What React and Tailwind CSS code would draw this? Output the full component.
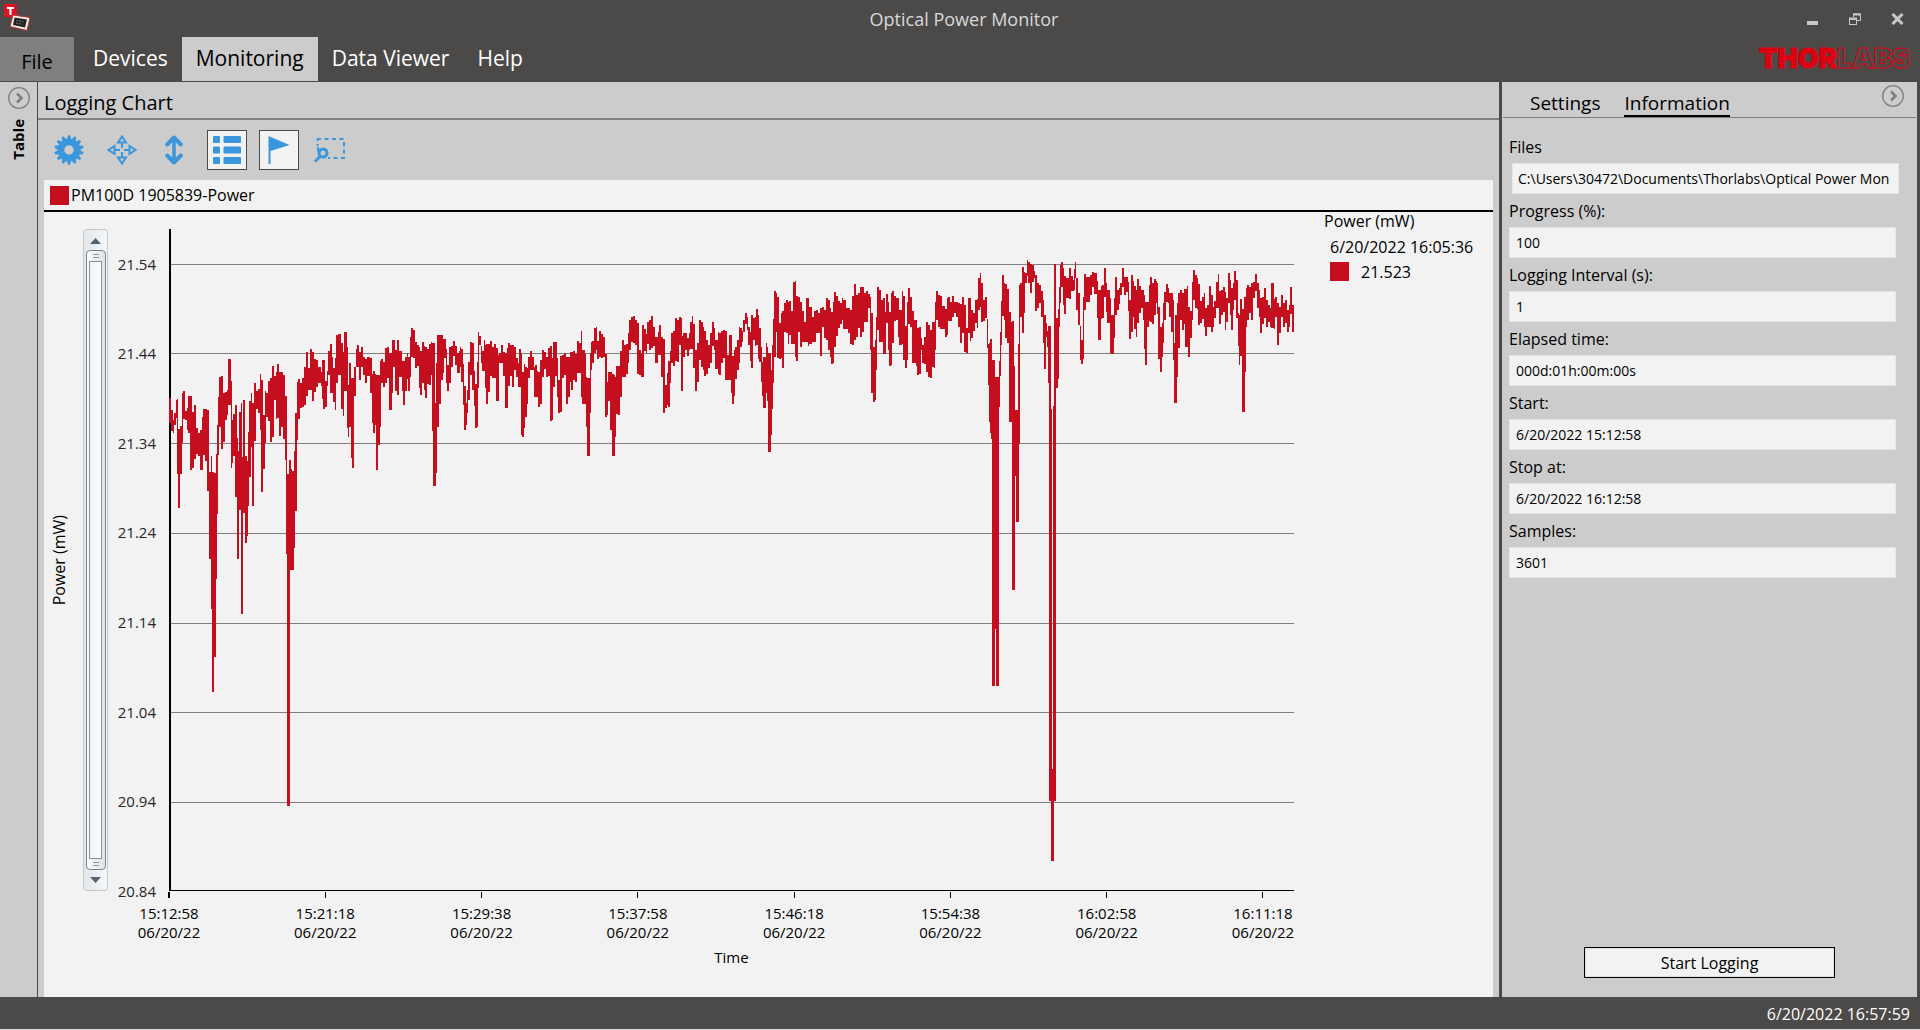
import { useState } from 'react'
import clsx from 'clsx'

const MENU = ['Devices', 'Monitoring', 'Data Viewer', 'Help']

const FIELDS = [
  { id: 'progress', label: 'Progress (%):', value: '100' },
  { id: 'interval', label: 'Logging Interval (s):', value: '1' },
  { id: 'elapsed', label: 'Elapsed time:', value: '000d:01h:00m:00s' },
  { id: 'start', label: 'Start:', value: '6/20/2022 15:12:58' },
  { id: 'stop', label: 'Stop at:', value: '6/20/2022 16:12:58' },
  { id: 'samples', label: 'Samples:', value: '3601' },
]

const Y_TICKS = ['21.54', '21.44', '21.34', '21.24', '21.14', '21.04', '20.94', '20.84']
const X_TICKS = ['15:12:58', '15:21:18', '15:29:38', '15:37:58', '15:46:18', '15:54:38', '16:02:58', '16:11:18']
const GRID_Y = [35, 124, 214, 304, 394, 483, 573]

// Min/max envelope of the logged samples: x, high, low in plot units
const TRACE = [
  -1,169,194, 1,181,202, 3,191,204, 4,184,196, 6,171,189, 7,170,245, 8,200,279, 10,197,245, 12,164,214, 13,162,190,
  15,182,191, 17,179,201, 18,167,204, 20,167,241, 22,183,239, 24,176,230, 26,199,225, 28,204,227, 30,201,241, 32,188,241,
  33,180,226, 35,180,232, 37,181,262, 39,243,330, 41,227,380, 42,243,463, 44,244,428, 46,225,350, 47,196,285, 48,168,226,
  49,148,198, 51,147,220, 53,164,213, 55,163,191, 57,161,186, 58,130,176, 61,152,239, 62,191,234, 63,185,227, 65,176,268,
  67,209,330, 68,222,330, 69,183,281, 71,174,385, 72,228,385, 73,171,284, 75,227,314, 77,232,307, 78,203,277, 79,172,248,
  81,164,218, 82,174,277, 84,154,212, 86,162,180, 88,160,184, 90,145,201, 91,151,263, 93,186,240, 95,162,214, 96,164,188,
  98,152,192, 100,149,213, 102,137,208, 104,147,171, 106,143,190, 107,135,189, 109,143,207, 111,143,198, 113,146,210,
  115,167,231, 116,167,325, 117,245,577, 119,231,577, 120,231,341, 121,240,341, 122,242,341, 124,222,319, 125,184,282, 127,153,211,
  128,150,190, 130,154,179, 132,149,178, 134,138,176, 136,123,167, 138,139,161, 140,120,161, 142,123,172, 144,130,163,
  146,131,158, 148,138,154, 151,143,157, 152,131,170, 153,131,180, 155,152,178, 157,142,157, 158,122,146, 160,115,164,
  162,128,164, 163,139,173, 165,129,181, 166,106,154, 168,105,146, 171,114,180, 173,123,187, 174,103,162, 177,118,199,
  178,156,208, 179,134,198, 181,149,229, 182,149,239, 184,138,167, 186,120,138, 187,116,138, 189,123,151, 191,118,138,
  193,128,146, 195,130,154, 197,128,147, 200,129,164, 202,145,194, 203,142,204, 205,145,196, 206,146,241, 208,146,216,
  210,132,198, 211,130,154, 213,133,158, 215,119,154, 217,118,149, 219,124,181, 222,111,164, 223,111,138, 225,121,162,
  227,111,166, 229,122,148, 232,132,162, 233,132,176, 235,128,162, 237,124,150, 238,128,162, 240,108,148, 241,99,128,
  243,101,129, 245,113,139, 247,116,137, 249,118,159, 250,122,166, 252,113,154, 254,117,161, 255,118,169, 257,120,155,
  259,115,156, 261,113,146, 262,114,202, 263,114,257, 265,174,257, 266,134,244, 267,106,198, 269,106,175, 271,106,151,
  273,110,144, 274,110,129, 276,120,154, 277,136,162, 279,118,154, 281,117,138, 283,112,127, 285,117,136, 287,124,144,
  289,122,144, 290,118,138, 291,120,153, 293,135,176, 294,157,201, 296,174,196, 297,161,184, 298,133,171, 300,113,146,
  302,114,161, 304,142,177, 305,155,199, 307,133,198, 308,103,159, 309,107,116, 311,117,134, 312,122,142, 314,111,142,
  315,116,159, 316,115,175, 318,115,163, 320,112,147, 322,118,149, 324,115,149, 326,119,172, 328,126,172, 329,124,134,
  331,116,134, 333,123,147, 335,124,179, 337,119,179, 338,114,157, 340,116,147, 342,116,158, 344,118,141, 346,129,148,
  348,134,158, 349,120,158, 351,124,206, 352,143,208, 354,135,199, 355,138,188, 357,139,175, 358,128,149, 360,122,141,
  362,128,141, 364,138,168, 365,136,168, 367,142,168, 368,143,178, 370,131,175, 372,121,148, 374,123,140, 376,128,148,
  378,119,147, 380,117,192, 382,129,191, 383,113,158, 385,113,147, 387,129,168, 388,151,184, 390,127,183, 392,126,149,
  394,124,146, 396,128,175, 398,128,168, 400,123,153, 401,123,161, 403,122,151, 405,125,153, 407,112,144, 409,114,144,
  411,102,168, 412,121,175, 415,125,175, 416,148,198, 417,149,227, 420,124,184, 421,113,141, 422,112,134, 424,99,124,
  426,98,121, 427,112,130, 429,102,128, 431,105,129, 433,108,128, 435,125,188, 437,153,186, 438,143,172, 440,143,201,
  442,145,227, 444,146,227, 445,148,208, 446,137,185, 448,137,186, 450,122,168, 452,111,148, 454,116,148, 456,115,145,
  458,104,134, 459,91,121, 461,88,113, 463,87,114, 465,91,116, 467,94,145, 469,121,146, 471,125,148, 472,96,148,
  474,100,122, 476,105,124, 477,93,115, 479,91,121, 481,87,119, 483,98,117, 485,108,134, 487,108,134, 488,103,126,
  489,96,126, 491,108,148, 493,110,184, 495,156,179, 497,144,176, 498,132,178, 500,122,154, 501,104,134, 503,102,137,
  505,89,132, 507,91,133, 509,88,116, 511,89,162, 512,107,162, 513,104,128, 515,104,121, 517,109,127, 519,104,121,
  520,93,120, 522,87,120, 523,95,139, 525,121,162, 527,114,153, 529,91,131, 531,93,138, 533,98,141, 534,102,147,
  536,111,145, 538,116,139, 540,104,134, 542,93,117, 544,99,121, 545,111,140, 548,103,145, 549,104,146, 551,102,134,
  553,101,129, 555,102,151, 557,126,151, 559,106,151, 561,106,164, 562,127,175, 564,121,167, 565,118,150, 567,111,141,
  569,98,134, 570,99,118, 572,102,113, 573,91,103, 575,84,95, 577,88,101, 578,98,116, 580,103,132, 581,86,139,
  583,89,111, 585,88,117, 586,80,116, 588,86,130, 589,99,133, 591,118,153, 592,133,167, 593,128,179, 596,114,164,
  597,118,172, 598,124,223, 601,141,206, 602,116,180, 603,90,154, 604,62,128, 606,64,103, 607,68,129, 609,94,130,
  611,84,129, 612,82,139, 614,74,103, 616,71,104, 618,73,115, 619,72,106, 621,82,115, 623,53,115, 625,52,128,
  626,67,132, 628,68,103, 630,73,118, 632,82,113, 634,93,113, 636,69,113, 638,69,117, 639,78,115, 642,88,113,
  644,82,113, 646,81,104, 648,84,104, 650,79,127, 652,78,98, 654,81,109, 656,69,111, 658,71,121, 660,79,128,
  661,83,135, 663,73,134, 664,63,118, 666,67,107, 668,72,99, 670,74,95, 672,69,91, 673,71,100, 676,79,100,
  678,79,104, 680,81,115, 682,67,116, 684,55,111, 686,66,108, 688,64,99, 690,58,108, 692,58,103, 694,64,93,
  696,62,93, 698,65,79, 700,68,121, 701,84,164, 703,118,173, 705,111,171, 706,88,141, 707,58,101, 709,61,113,
  711,71,113, 713,69,125, 715,83,125, 716,65,94, 718,73,121, 719,83,137, 721,64,136, 722,62,114, 724,67,92,
  726,69,91, 728,69,108, 729,81,116, 732,62,115, 733,67,131, 735,97,139, 737,73,131, 738,59,95, 740,68,98,
  742,82,134, 744,91,134, 746,91,137, 747,99,146, 749,98,145, 751,109,121, 752,116,134, 754,108,135, 756,93,143,
  758,96,148, 760,101,149, 762,93,138, 764,93,139, 765,73,121, 766,62,91, 768,66,98, 770,67,100, 772,77,100,
  775,80,108, 777,69,106, 778,68,92, 780,73,92, 782,67,88, 784,73,84, 786,73,88, 788,74,98, 790,75,114,
  792,68,104, 794,76,123, 796,99,124, 798,69,104, 800,69,112, 801,81,109, 803,84,102, 805,71,94, 807,70,99,
  808,49,81, 810,44,78, 811,54,93, 813,71,92, 815,68,89, 817,90,119, 818,115,156, 819,114,193, 820,110,204,
  821,110,210, 822,131,457, 825,148,400, 826,148,457, 829,132,178, 830,103,147, 831,72,116, 832,46,87,
  834,54,91, 835,55,109, 837,60,114, 839,83,193, 841,93,193, 842,92,361, 844,137,361, 845,181,247, 846,181,293,
  848,115,293, 849,56,215, 850,54,88, 852,38,104, 854,43,84, 855,44,54, 857,31,47, 858,33,54, 860,35,64,
  862,36,53, 864,42,49, 865,46,82, 867,54,79, 869,56,74, 871,62,88, 873,71,114, 874,86,140, 876,94,108,
  877,102,118, 878,97,154, 879,97,572, 881,180,632, 882,540,632, 883,177,632, 884,35,572, 886,89,159, 888,80,150, 889,58,98, 890,36,74,
  891,33,58, 893,39,76, 894,47,85, 896,49,69, 899,39,70, 901,47,62, 903,51,62, 904,40,61, 905,33,49,
  906,49,81, 908,64,96, 910,97,131, 911,111,135, 913,68,130, 914,45,81, 916,48,73, 918,48,73, 920,46,66,
  922,43,58, 924,44,65, 926,44,65, 927,52,89, 928,61,111, 931,57,90, 932,56,89, 934,39,68, 936,54,83,
  937,61,94, 940,69,124, 941,86,125, 944,69,109, 945,48,86, 947,61,81, 949,59,75, 950,54,66, 952,39,58,
  954,48,66, 956,48,63, 958,53,82, 959,71,110, 961,46,103, 963,52,88, 964,57,100, 966,61,108, 967,50,94,
  969,57,84, 971,61,79, 973,61,91, 974,66,120, 975,73,136, 977,73,98, 979,56,92, 980,48,93, 982,54,95,
  984,50,86, 986,52,74, 987,54,85, 988,78,130, 990,98,143, 992,94,128, 993,74,114, 994,63,91, 996,55,73,
  998,59,74, 999,64,88, 1001,64,103, 1003,71,131, 1004,114,174, 1005,86,174, 1007,74,148, 1008,64,119, 1010,61,91,
  1012,64,101, 1014,60,95, 1015,60,118, 1017,57,118, 1018,78,128, 1020,82,109, 1022,53,91, 1023,41,71, 1025,46,79,
  1027,49,80, 1028,55,96, 1030,72,94, 1032,68,90, 1034,64,98, 1035,79,107, 1037,76,98, 1039,57,98, 1041,66,103,
  1043,78,98, 1044,72,89, 1046,53,79, 1048,45,79, 1049,62,95, 1051,61,86, 1053,58,83, 1055,63,101, 1056,69,93,
  1058,44,74, 1060,51,86, 1061,59,101, 1063,54,81, 1064,42,71, 1066,51,89, 1068,84,117, 1069,86,136, 1070,70,127,
  1072,80,183, 1074,68,183, 1075,68,143, 1076,59,98, 1077,56,91, 1079,58,84, 1081,54,91, 1083,53,69, 1085,45,62,
  1087,54,79, 1089,61,88, 1090,69,104, 1092,68,95, 1094,59,89, 1096,71,98, 1098,76,93, 1100,79,98, 1101,54,99,
  1104,70,100, 1105,68,88, 1107,74,116, 1109,78,104, 1111,66,88, 1113,74,98, 1115,71,94, 1117,81,103, 1119,76,98,
  1120,58,85, 1122,76,103, 1124,76,103,
]

function tracePath() {
  let d = ''
  for (let i = 0; i + 3 < TRACE.length; i += 3) {
    d += `M${TRACE[i]} ${TRACE[i + 1]}H${TRACE[i + 3]}V${TRACE[i + 2]}H${TRACE[i]}Z`
  }
  return d
}

function AppIcon() {
  return (
    <svg width="28" height="30" viewBox="0 0 28 30" aria-hidden="true">
      <rect x="0" y="0" width="13" height="13" fill="#e01025" />
      <path d="M3 3h7v2H7.600v6H5.400V5H3z" fill="#fff" />
      <path d="M9 11l17 2.500-3 13L6 22.500z" fill="#f5eeee" stroke="#b5342c" strokeWidth="1" />
      <path d="M10.500 13.500l12.500 2-2 8-12-2.500z" fill="#222" />
      <path d="M12.500 16.500l7 1.200M12 19l6.500 1.200" stroke="#777" strokeDasharray="2 1" />
    </svg>
  )
}

function Logo() {
  return (
    <svg width="158" height="38" viewBox="0 0 158 38" role="img" aria-label="Thorlabs">
      <g fontFamily="Inter, 'Liberation Sans', sans-serif" fontWeight="900" fontSize="27">
        <text x="1" y="28" fill="#dc0010" stroke="#dc0010">THOR</text>
        <text x="79" y="28" fill="none" stroke="#dc0010">LABS</text>
      </g>
    </svg>
  )
}

function CircleChevron() {
  return (
    <svg width="22" height="22" viewBox="0 0 22 22" fill="none" stroke="#7f7f7f" aria-hidden="true">
      <circle cx="11" cy="11" r="10.300" strokeWidth="1.300" />
      <path d="M9 6.500l4.500 4.500L9 15.500" strokeWidth="2.600" />
    </svg>
  )
}

function GearIcon() {
  const teeth = Array.from({ length: 14 }, (_, i) => (i * 360) / 14)
  return (
    <svg width="30" height="30" viewBox="0 0 30 30" aria-hidden="true">
      <circle cx="15" cy="15" r="8" fill="none" stroke="#3a96dd" strokeWidth="6.500" />
      {teeth.map((a) => (
        <path key={a} d="M12.500 5L14 0.300h2L17.500 5z" fill="#3a96dd" transform={`rotate(${a} 15 15)`} />
      ))}
    </svg>
  )
}

function MoveIcon() {
  return (
    <svg width="30" height="30" viewBox="0 0 30 30" fill="none" stroke="#3a96dd" strokeWidth="2" aria-hidden="true">
      {[0, 90, 180, 270].map((a) => (
        <path key={a} d="M15 1.500L19 7.500H11ZM15 7.500V13" transform={`rotate(${a} 15 15)`} />
      ))}
    </svg>
  )
}

function UpDownIcon() {
  return (
    <svg width="18" height="30" viewBox="0 0 18 30" fill="none" stroke="#3a96dd" strokeLinejoin="round" strokeLinecap="round" aria-hidden="true">
      <path d="M9 4V26" strokeWidth="3.500" />
      <path d="M2.200 9.500L9 2.500L15.800 9.500M2.200 20.500L9 27.500L15.800 20.500" strokeWidth="4" />
    </svg>
  )
}

function ListIcon() {
  return (
    <svg width="28" height="28" viewBox="0 0 28 28" fill="#3a96dd" aria-hidden="true">
      {[0, 10.500, 21].map((y) => (
        <g key={y}>
          <rect x="0" y={y} width="7" height="7" rx="1" />
          <rect x="10.500" y={y} width="17.500" height="7" rx="1" />
        </g>
      ))}
    </svg>
  )
}

function FlagIcon() {
  return (
    <svg width="22" height="30" viewBox="0 0 22 30" fill="#3a96dd" aria-hidden="true">
      <path d="M0.500 1L21.500 10L2.500 16V29H0.500Z" />
    </svg>
  )
}

function ZoomAreaIcon() {
  return (
    <svg width="31" height="26" viewBox="0 0 31 26" fill="none" stroke="#3a96dd" strokeWidth="2" aria-hidden="true">
      <path d="M3 2H30V21H14" strokeDasharray="4 3.500" />
      <path d="M3.500 2V9" strokeDasharray="2 3" />
      <circle cx="9" cy="16" r="4" strokeWidth="3" />
      <path d="M6 19.500L1 24.500" strokeWidth="3" />
      <path d="M4 10V15" />
    </svg>
  )
}

function WindowControls() {
  return (
    <div className="flex items-center gap-[30px] text-[#c8c8c8]">
      <button aria-label="Minimize" className="flex h-3 w-3 items-end">
        <span className="h-1 w-[11px] bg-[#c8c8c8]" />
      </button>
      <button aria-label="Restore">
        <svg width="12" height="12" viewBox="0 0 12 12" fill="none" stroke="currentColor">
          <path d="M4.500 4V1H11.500V7.500H8" />
          <path d="M4 1.500H12" strokeWidth="2" />
          <rect x="0.500" y="5" width="7" height="6.500" />
          <path d="M0 6H8" strokeWidth="2" />
        </svg>
      </button>
      <button aria-label="Close">
        <svg width="13" height="12" viewBox="0 0 13 12" fill="none" stroke="currentColor" strokeWidth="3">
          <path d="M1.500 1L11.500 11M11.500 1L1.500 11" />
        </svg>
      </button>
    </div>
  )
}

function Header({ active, onSelect }) {
  return (
    <header className="bg-[#4c4a48] text-white">
      <div className="grid h-[37px] grid-cols-[1fr_auto_1fr] items-center pl-1 pr-4">
        <AppIcon />
        <h1 className="pl-5 text-lg text-[#d8d8d8]">Optical Power Monitor</h1>
        <div className="flex justify-end">
          <WindowControls />
        </div>
      </div>
      <div className="flex h-[45px] items-start justify-between">
        <nav className="flex h-11">
          <button className="w-[74px] bg-[#7f7f7f] pt-1.5 text-xl text-black">File</button>
          <div className="flex pl-[5px]">
            {MENU.map((item) => (
              <button
                key={item}
                onClick={() => onSelect(item)}
                className={clsx('px-3.5 text-[21px]', item === active && 'bg-[#cccccc] text-black')}
              >
                {item}
              </button>
            ))}
          </div>
        </nav>
        <div className="pr-1 pt-[3px]">
          <Logo />
        </div>
      </div>
    </header>
  )
}

function Toolbar() {
  const [legend, setLegend] = useState(true)
  const [marker, setMarker] = useState(true)
  const toggle = (on) => clsx('flex h-10 w-10 items-center justify-center border', on ? 'border-[#4c4a48] bg-[#f2f2f2]' : 'border-transparent')
  return (
    <div className="flex h-[60px] items-center pl-4">
      <button aria-label="Chart settings" className="w-[53px]"><GearIcon /></button>
      <button aria-label="Pan" className="w-[58px]"><MoveIcon /></button>
      <button aria-label="Autoscale" className="w-[42px]"><UpDownIcon /></button>
      <button aria-label="Legend" aria-pressed={legend} onClick={() => setLegend(!legend)} className={toggle(legend)}>
        <ListIcon />
      </button>
      <button aria-label="Marker" aria-pressed={marker} onClick={() => setMarker(!marker)} className={clsx('ml-3', toggle(marker))}>
        <FlagIcon />
      </button>
      <button aria-label="Zoom to area" className="ml-[15px]"><ZoomAreaIcon /></button>
    </div>
  )
}

function RangeBar() {
  return (
    <div className="flex flex-col items-center rounded border border-[#c3c9cf] bg-linear-to-r from-[#e3e7ec] to-[#f4f7fa]">
      <svg width="11" height="20" viewBox="0 0 11 20" aria-hidden="true">
        <path d="M0 14L5.500 8L11 14Z" fill="#56626f" />
      </svg>
      <div className="flex w-5 flex-1 flex-col items-center rounded border border-[#7d858d] bg-linear-to-r from-[#f8f9fa] to-[#dfe3e8]">
        <div className="my-[3px] h-1 w-1.5 border-y border-[#8d98a3]" />
        <div className="w-[13px] flex-1 border border-[#8b9199] bg-linear-to-r from-[#eef0f5] to-white" />
        <div className="my-[3px] h-1 w-1.5 border-y border-[#8d98a3]" />
      </div>
      <svg width="11" height="20" viewBox="0 0 11 20" aria-hidden="true">
        <path d="M0 7L5.500 13L11 7Z" fill="#56626f" />
      </svg>
    </div>
  )
}

function Plot() {
  return (
    <svg className="block h-full w-full" viewBox="0 0 1125 662" preserveAspectRatio="none" shapeRendering="crispEdges" role="img" aria-label="Power over time">
      {GRID_Y.map((y) => (
        <rect key={y} x="0" y={y} width="1125" height="1" fill="#7f7f7f" />
      ))}
      <rect x="0" y="0" width="2" height="662" fill="#000" />
      <rect x="0" y="661" width="1125" height="1" fill="#000" />
      <path d={tracePath()} fill="#c50f1f" transform="translate(1 0)" />
    </svg>
  )
}

function LoggingChart() {
  return (
    <div className="grid min-h-0 flex-1 grid-cols-[39px_25px_61px_1fr_199px] grid-rows-[1fr_106px] pt-[17px]">
      <div className="flex items-center justify-center pr-2.5">
        <span className="rotate-180 whitespace-nowrap text-base [writing-mode:vertical-rl]">Power (mW)</span>
      </div>
      <RangeBar />
      <div className="flex flex-col justify-between pr-[13px] pt-[35px]">
        {Y_TICKS.map((t) => (
          <div key={t} className="flex h-0 items-center justify-end text-[#262626]">{t}</div>
        ))}
      </div>
      <Plot />
      <div className="pl-[30px] text-base">
        <div className="-mt-[17px] h-[19px] leading-[19px]">Power (mW)</div>
        <div className="flex h-[31px] items-center pl-1.5">6/20/2022 16:05:36</div>
        <div className="flex h-[19px] items-center gap-3 pl-1.5">
          <span className="h-[19px] w-[19px] bg-[#c50f1f]" />
          21.523
        </div>
      </div>

      <div className="col-span-3" />
      <div>
        <div className="flex justify-between pr-[31px] pt-px">
          {X_TICKS.map((t, i) => (
            <div key={t} className="flex w-0 flex-col items-center whitespace-nowrap text-center leading-[19px]">
              <span className={clsx('mb-1.5 h-1.5 shrink-0 bg-black', i === 0 ? 'w-0.5' : 'w-px')} />
              {t}
              <br />
              06/20/22
            </div>
          ))}
        </div>
        <div className="pt-1 text-center">Time</div>
      </div>
    </div>
  )
}

function InfoField({ id, label, value }) {
  return (
    <div>
      <label htmlFor={id} className="flex h-[33px] items-center">{label}</label>
      <input
        id={id}
        readOnly
        defaultValue={value}
        className="block h-[31px] w-full border border-[#e6e6e6] bg-[#f2f2f2] px-1.5 text-sm outline-none"
      />
    </div>
  )
}

function InfoPanel() {
  const [tab, setTab] = useState('Information')
  return (
    <aside className="flex w-[421px] shrink-0 flex-col border-l-[3px] border-r-[3px] border-[#4c4a48] bg-[#cccccc]">
      <div className="mx-px flex h-9 items-start justify-between border-b border-[#7f7f7f] pr-3">
        <div className="flex h-[35px] gap-6 pl-[27px]">
          {['Settings', 'Information'].map((t) => (
            <button
              key={t}
              onClick={() => setTab(t)}
              className={clsx('border-b-2 pt-2 text-[19px] leading-6', t === tab ? 'border-black' : 'border-transparent')}
            >
              {t}
            </button>
          ))}
        </div>
        <button aria-label="Collapse panel" className="pt-[3px]"><CircleChevron /></button>
      </div>
      <div className="pl-[7px] pr-[21px] pt-3 text-base">
        <label htmlFor="files" className="flex h-[33px] items-center">Files</label>
        <div className="-mr-[3px] pl-[3px]">
          <input
            id="files"
            readOnly
            defaultValue="C:\Users\30472\Documents\Thorlabs\Optical Power Mon"
            className="block h-[31px] w-full border border-[#e6e6e6] bg-[#f2f2f2] pl-[5px] text-sm outline-none"
          />
        </div>
        {FIELDS.map((f) => (
          <InfoField key={f.id} {...f} />
        ))}
      </div>
      <div className="mt-auto flex justify-center pb-[19px]">
        <button className="h-[31px] w-[251px] border border-black bg-[#f2f2f2] text-base shadow-[inset_0_0_0_1px_#e0e0e0]">
          Start Logging
        </button>
      </div>
    </aside>
  )
}

export default function App() {
  const [menu, setMenu] = useState('Monitoring')
  return (
    <div className="flex min-h-screen flex-col border-b border-[#d9d9d9] bg-[#cccccc] font-['Open_Sans','Noto_Sans',sans-serif] text-[15px] text-black">
      <Header active={menu} onSelect={setMenu} />
      <div className="flex flex-1">
        <div className="flex w-[38px] shrink-0 flex-col items-center gap-2.5 border-r border-[#4c4a48] pt-[5px]">
          <button aria-label="Expand table"><CircleChevron /></button>
          <button className="rotate-180 font-bold [writing-mode:vertical-rl]">Table</button>
        </div>
        <main className="flex min-w-0 flex-1 flex-col">
          <h2 className="flex h-[38px] items-center border-b-2 border-[#7f7f7f] pl-1.5 pt-1.5 text-xl">Logging Chart</h2>
          <Toolbar />
          <div className="ml-1.5 mr-1.5 flex flex-1 flex-col bg-[#f2f2f2]">
            <div className="flex h-8 items-center gap-0.5 border-b-2 border-black pl-1.5 text-base">
              <span className="h-[19px] w-[19px] bg-[#c50f1f]" />
              PM100D 1905839-Power
            </div>
            <LoggingChart />
          </div>
        </main>
        <InfoPanel />
      </div>
      <footer className="flex h-8 items-center justify-end bg-[#4c4a48] pr-2.5 pt-0.5 text-base text-white">6/20/2022 16:57:59</footer>
    </div>
  )
}
